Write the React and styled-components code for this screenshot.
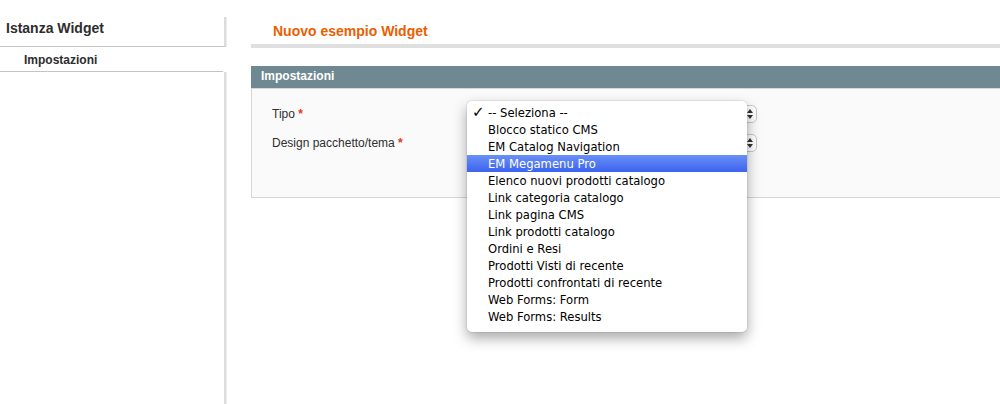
import styled, { createGlobalStyle } from 'styled-components';

const GlobalStyle = createGlobalStyle`
  html, body {
    margin: 0;
    padding: 0;
    background: #fff;
    overflow: hidden;
  }
  body {
    font-family: 'Liberation Sans', Arial, sans-serif;
    font-size: 12px;
    color: #2f2f2f;
  }
`;

const options = [
  '-- Seleziona --',
  'Blocco statico CMS',
  'EM Catalog Navigation',
  'EM Megamenu Pro',
  'Elenco nuovi prodotti catalogo',
  'Link categoria catalogo',
  'Link pagina CMS',
  'Link prodotti catalogo',
  'Ordini e Resi',
  'Prodotti Visti di recente',
  'Prodotti confrontati di recente',
  'Web Forms: Form',
  'Web Forms: Results',
];

const App = () => {
  return (
    <>
      <GlobalStyle />
      <Page>
        <Sidebar>
          <SideTitle>Istanza Widget</SideTitle>
          <SideTab>Impostazioni</SideTab>
          <SideRest />
        </Sidebar>
        <Main>
          <PageHead>
            <PageTitle>Nuovo esempio Widget</PageTitle>
          </PageHead>
          <Section>
            <SectionHead>Impostazioni</SectionHead>
            <Fieldset>
              <Row>
                <Label>
                  Tipo <Required>*</Required>
                </Label>
                <Select />
              </Row>
              <Row>
                <Label>
                  Design pacchetto/tema <Required>*</Required>
                </Label>
                <Select />
              </Row>
              <Menu>
                {options.map((opt, i) => (
                  <MenuItem key={opt} $active={i === 3}>
                    <Check>{i === 0 ? '✓' : ''}</Check>
                    {opt}
                  </MenuItem>
                ))}
              </Menu>
            </Fieldset>
          </Section>
        </Main>
      </Page>
    </>
  );
};

const Page = styled.div`
  display: flex;
  width: 1000px;
  height: 404px;
`;

const Sidebar = styled.aside`
  width: 226px;
  flex-shrink: 0;
  padding-top: 17px;
  display: flex;
  flex-direction: column;
`;

const sideBorder = `
  border-right: 2px solid #dcdcdc;
  box-shadow: 1px 0 0 #ececec;
`;

const SideTitle = styled.h3`
  margin: 0;
  height: 29px;
  line-height: 23px;
  padding-left: 6px;
  font-size: 14px;
  font-weight: bold;
  color: #2d2d2d;
  border-bottom: 1px solid #c4c4c4;
  ${sideBorder}
`;

const SideTab = styled.div`
  height: 24px;
  line-height: 26px;
  padding-left: 24px;
  font-size: 12px;
  font-weight: bold;
  color: #2d2d2d;
  border-bottom: 1px solid #c4c4c4;
  margin-right: 3px;
`;

const SideRest = styled.div`
  flex: 1;
  ${sideBorder}
`;

const Main = styled.main`
  flex: 1;
  margin-left: 25px;
  padding-top: 17px;
  min-width: 0;
`;

const PageHead = styled.div`
  height: 27px;
  padding-left: 22px;
  border-bottom: 4px solid #dfdfdf;
`;

const PageTitle = styled.h3`
  margin: 0;
  line-height: 28px;
  font-size: 14px;
  font-weight: bold;
  color: #eb5e00;
`;

const Section = styled.section`
  margin-top: 18px;
`;

const SectionHead = styled.h4`
  margin: 0;
  height: 22px;
  line-height: 21px;
  padding-left: 10px;
  background: #6f8992;
  color: #fff;
  font-size: 12px;
  font-weight: bold;
`;

const Fieldset = styled.div`
  position: relative;
  height: 110px;
  padding-top: 10px;
  box-sizing: border-box;
  background: #fafafa;
  border: 1px solid #d6d6d6;
  border-right: none;
`;

const Row = styled.div`
  display: flex;
  align-items: center;
  height: 29px;
  padding-left: 20px;
`;

const Label = styled.label`
  width: 195px;
  font-size: 12px;
  color: #2f2f2f;
`;

const Required = styled.span`
  color: #eb340a;
  font-weight: bold;
`;

const Select = styled.div`
  width: 288px;
  height: 16px;
  border: 1px solid #c8c8c8;
  border-radius: 5px;
  background: #fff;
  position: relative;

  &::after {
    content: '';
    position: absolute;
    right: 3px;
    top: 3px;
    width: 0;
    height: 0;
    border-left: 3px solid transparent;
    border-right: 3px solid transparent;
    border-bottom: 4px solid #333;
  }

  &::before {
    content: '';
    position: absolute;
    right: 3px;
    bottom: 3px;
    width: 0;
    height: 0;
    border-left: 3px solid transparent;
    border-right: 3px solid transparent;
    border-top: 4px solid #333;
  }
`;

const Menu = styled.ul`
  position: absolute;
  left: 215px;
  top: 12px;
  width: 280px;
  margin: 0;
  padding: 3px 0 7px;
  list-style: none;
  background: #fff;
  border-radius: 5px;
  box-shadow: 0 6px 14px rgba(0, 0, 0, 0.35), 0 0 0 1px rgba(0, 0, 0, 0.06);
  font-family: 'DejaVu Sans', Verdana, sans-serif;
  font-size: 11.6px;
`;

const MenuItem = styled.li`
  display: flex;
  align-items: center;
  height: 17px;
  padding-left: 5px;
  color: ${(p) => (p.$active ? '#fff' : '#000')};
  background: ${(p) =>
    p.$active ? 'linear-gradient(#6990f5, #3c63ef)' : 'transparent'};
`;

const Check = styled.span`
  width: 16px;
  font-size: 15px;
  font-weight: bold;
  line-height: 1;
`;

export default App;
